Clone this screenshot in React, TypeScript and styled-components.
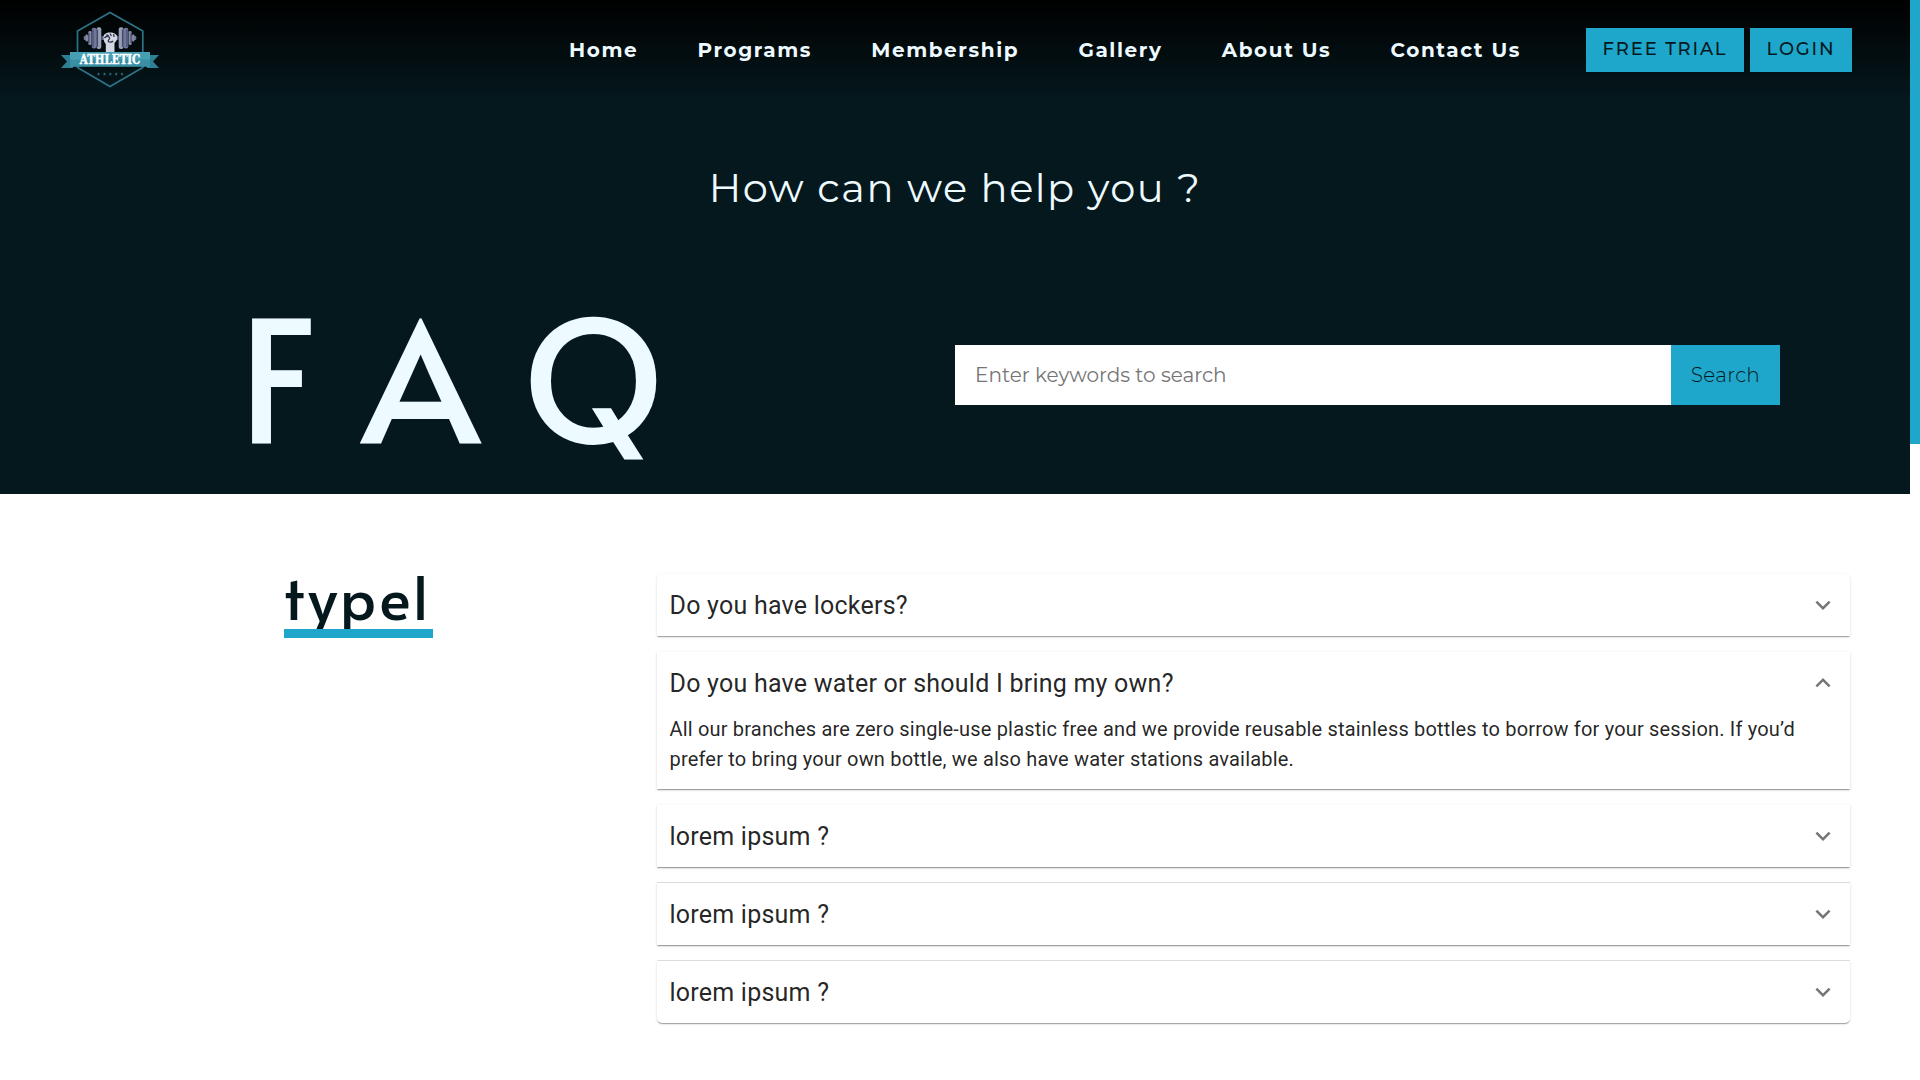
import React from "react";
import styled, { createGlobalStyle, css } from "styled-components";

const accent = "#1ea7ca";
const ink = "#05181d";
const ice = "#edfaff";

const GlobalStyle = createGlobalStyle`
  *, *::before, *::after { box-sizing: border-box; }
  body { margin: 0; background: #fff; font-family: Montserrat, Inter, sans-serif; font-size: 20px; }
`;

const Screen = styled.div`
  display: flex;
  height: 1080px;
  overflow: hidden;
`;

const Page = styled.div`
  flex: 1;
  min-width: 0;
`;

const ScrollTrack = styled.div`
  width: 10px;
  background: #fff;
`;

const ScrollThumb = styled.div`
  height: 444px;
  background: ${accent};
`;

const Hero = styled.header`
  height: 494px;
  background: ${ink};
`;

const NavBar = styled.nav`
  display: flex;
  align-items: center;
  height: 100px;
  padding: 0 58px 0 60px;
  background: linear-gradient(#000, ${ink});
`;

const Links = styled.div`
  display: flex;
  gap: 59.2px;
  margin-left: auto;
`;

const NavLink = styled.a`
  color: ${ice};
  font-weight: 700;
  font-size: 20px;
  line-height: 24px;
  letter-spacing: 1.6px;
`;

const Actions = styled.div`
  display: flex;
  gap: 6px;
  margin-left: 65px;
`;

const ActionButton = styled.button<{ $width: number }>`
  width: ${(p) => p.$width}px;
  height: 44px;
  padding: 0 0 3px;
  border: 0;
  background: ${accent};
  color: ${ink};
  font: 500 18px Montserrat, Inter, sans-serif;
  letter-spacing: 1.82px;
`;

const Heading = styled.h1`
  margin: 63px 0 0;
  color: ${ice};
  font-weight: 400;
  font-size: 40px;
  line-height: 50px;
  letter-spacing: 1.5px;
  text-align: center;
`;

const HeroRow = styled.div`
  display: grid;
  grid-template-columns: 955px 825px;
  align-items: start;
`;

const Faq = styled.div`
  height: 190px;
  margin-top: 66px;
  padding-left: 239px;
  color: ${ice};
  font: 400 170px/190px Alata, Lato, sans-serif;
  font-kerning: none;
  letter-spacing: 44px;
  white-space: nowrap;
`;

const SearchForm = styled.div`
  display: flex;
  height: 60px;
  margin-top: 132px;
`;

const SearchInput = styled.input`
  flex: 1;
  min-width: 0;
  padding: 0 20px;
  border: 0;
  background: #fff;
  font: 400 20px Montserrat, Inter, sans-serif;
  &::placeholder { color: #757575; }
`;

const SearchButton = styled.button`
  width: 109px;
  padding: 0;
  border: 0;
  background: ${accent};
  color: ${ink};
  font: 300 20px Montserrat, Inter, sans-serif;
  letter-spacing: 0.3px;
`;

const Content = styled.main`
  display: grid;
  grid-template-columns: 657px 1193px;
  padding-top: 80px;
`;

const Category = styled.h2`
  position: relative;
  justify-self: start;
  width: 149px;
  height: 64px;
  margin: 0 0 0 284px;
  color: ${ink};
  font: 400 60px/43px Alata, Lato, sans-serif;
  letter-spacing: 2.5px;
  &::after {
    content: "";
    position: absolute;
    inset: auto 0 0;
    height: 9px;
    background: ${accent};
  }
`;

const Accordion = styled.div`
  display: flex;
  flex-direction: column;
  gap: 16px;
`;

const Item = styled.section<{ $divider?: boolean }>`
  position: relative;
  background: #fff;
  color: rgba(0, 0, 0, 0.87);
  font-family: Roboto, sans-serif;
  box-shadow: 0 2px 1px -1px rgba(0, 0, 0, 0.2), 0 1px 1px rgba(0, 0, 0, 0.14), 0 1px 3px rgba(0, 0, 0, 0.12);
  &:first-child { border-radius: 5px 5px 0 0; }
  &:last-child { border-radius: 0 0 5px 5px; }
  ${(p) => p.$divider && css`
    &::before {
      content: "";
      position: absolute;
      inset: -1px 0 auto;
      height: 1px;
      background: rgba(0, 0, 0, 0.12);
    }
  `}
`;

const Summary = styled.div`
  display: flex;
  align-items: center;
  justify-content: space-between;
  height: 62px;
  padding: 0 12px 0 12.5px;
`;

const Question = styled.h3`
  margin: 2px 0 0;
  font-weight: 400;
  font-size: 25px;
  line-height: 40px;
  letter-spacing: 0.00938em;
`;

const Answer = styled.p`
  margin: 0;
  padding: 0 12.5px 15px;
  font-size: 20px;
  line-height: 30px;
  letter-spacing: 0.18px;
`;

const Chevron = styled.svg<{ $open?: boolean }>`
  width: 30px;
  height: 30px;
  fill: rgba(0, 0, 0, 0.54);
  transform: ${(p) => (p.$open ? "rotate(180deg)" : "none")};
`;

const LogoSvg = styled.svg`
  width: 100px;
  height: 80px;
`;

const Dumbbell = () => (
  <g>
    <rect x="23.7" y="26" width="5" height="4" rx="1" fill="#6b7290" />
    <rect x="25.5" y="24.5" width="2.5" height="7" rx="1" fill="#8088a6" />
    <rect x="28.4" y="21" width="3" height="14" rx="1.2" fill="#858ca8" />
    <rect x="31.7" y="17.8" width="4.6" height="20.8" rx="2" fill="#70779a" />
    <rect x="36.5" y="17.3" width="4.8" height="21.7" rx="2" fill="#989fba" />
    <path d="M33 19.5v17.500M37.600 19.500v17.500M29 23v10" stroke="#3d4463" strokeWidth="1" />
    <rect x="41.3" y="26" width="5" height="4" fill="#59607e" />
  </g>
);

const Logo = () => (
  <LogoSvg viewBox="0 0 100 80">
    <path d="M50 2.5 82.800 21v36.500L50 76.500 17.500 57.500V21Z" fill="none" stroke="#2d7387" strokeWidth="1.7" />
    <Dumbbell />
    <g transform="matrix(-1 0 0 1 100 0)"><Dumbbell /></g>
    <path d="M43.500 27.500c-.3-3 2.500-5 6.500-5s7.200 1.500 7.200 5c0 2.500-1.200 4-2.700 5.500V43h-8.700V34c-1.500-1.500-2.200-3.500-2.300-6.500Z" fill="#d3d7e4" />
    <path d="M44.500 28c2-2.500 4-2 5-.5s-2 2.500-1.200 3.800 3.700.9 4.700-.3M46.500 24.500l2.200 1.800M50 23.500l1.300 2.500M53.600 24.200l.4 2.800" fill="none" stroke="#2c3350" strokeWidth="1.3" />
    <path d="M1 45h12v13H1l6-6.500ZM99 45H87v13h12l-6-6.500Z" fill="#2c7f94" />
    <path d="M10 42h80v14.500H10Z" fill="#46a0b4" />
    <path d="M10 49.500h80v7H10Z" fill="#3990a5" />
    <text x="19.8" y="53.7" textLength="60.5" lengthAdjust="spacingAndGlyphs" fill="#fff" stroke="#fff" strokeWidth=".5" fontFamily="DejaVu Serif, serif" fontWeight="700" fontSize="13.7">ATHLETIC</text>
    <g fill="#2b7284">
      {[38.5, 44.5, 50.3, 56.2, 62].map((x) => <path key={x} d={`M${x} 62.300l.5 1.100 1.100.1-.8.8.2 1.200-1-.6-1 .6.2-1.200-.8-.8 1.100-.1Z`} />)}
    </g>
  </LogoSvg>
);

const links = ["Home", "Programs", "Membership", "Gallery", "About Us", "Contact Us"];

const items = [
  { q: "Do you have lockers?" },
  {
    q: "Do you have water or should I bring my own?",
    a: "All our branches are zero single-use plastic free and we provide reusable stainless bottles to borrow for your session. If you’d prefer to bring your own bottle, we also have water stations available.",
  },
  { q: "lorem ipsum ?" },
  { q: "lorem ipsum ?", divider: true },
  { q: "lorem ipsum ?", divider: true },
];

export default function App() {
  return (
    <Screen>
      <GlobalStyle />
      <Page>
        <Hero>
          <NavBar>
            <Logo />
            <Links>{links.map((l) => <NavLink key={l}>{l}</NavLink>)}</Links>
            <Actions>
              <ActionButton $width={158}>FREE TRIAL</ActionButton>
              <ActionButton $width={102}>LOGIN</ActionButton>
            </Actions>
          </NavBar>
          <Heading>How can we help you ?</Heading>
          <HeroRow>
            <Faq>FAQ</Faq>
            <SearchForm>
              <SearchInput placeholder="Enter keywords to search" />
              <SearchButton>Search</SearchButton>
            </SearchForm>
          </HeroRow>
        </Hero>
        <Content>
          <Category>typel</Category>
          <Accordion>
            {items.map((it, i) => (
              <Item key={i} $divider={it.divider}>
                <Summary>
                  <Question>{it.q}</Question>
                  <Chevron viewBox="0 0 24 24" $open={!!it.a}>
                    <path d="M16.590 8.590 12 13.170 7.410 8.590 6 10l6 6 6-6z" />
                  </Chevron>
                </Summary>
                {it.a && <Answer>{it.a}</Answer>}
              </Item>
            ))}
          </Accordion>
        </Content>
      </Page>
      <ScrollTrack><ScrollThumb /></ScrollTrack>
    </Screen>
  );
}
